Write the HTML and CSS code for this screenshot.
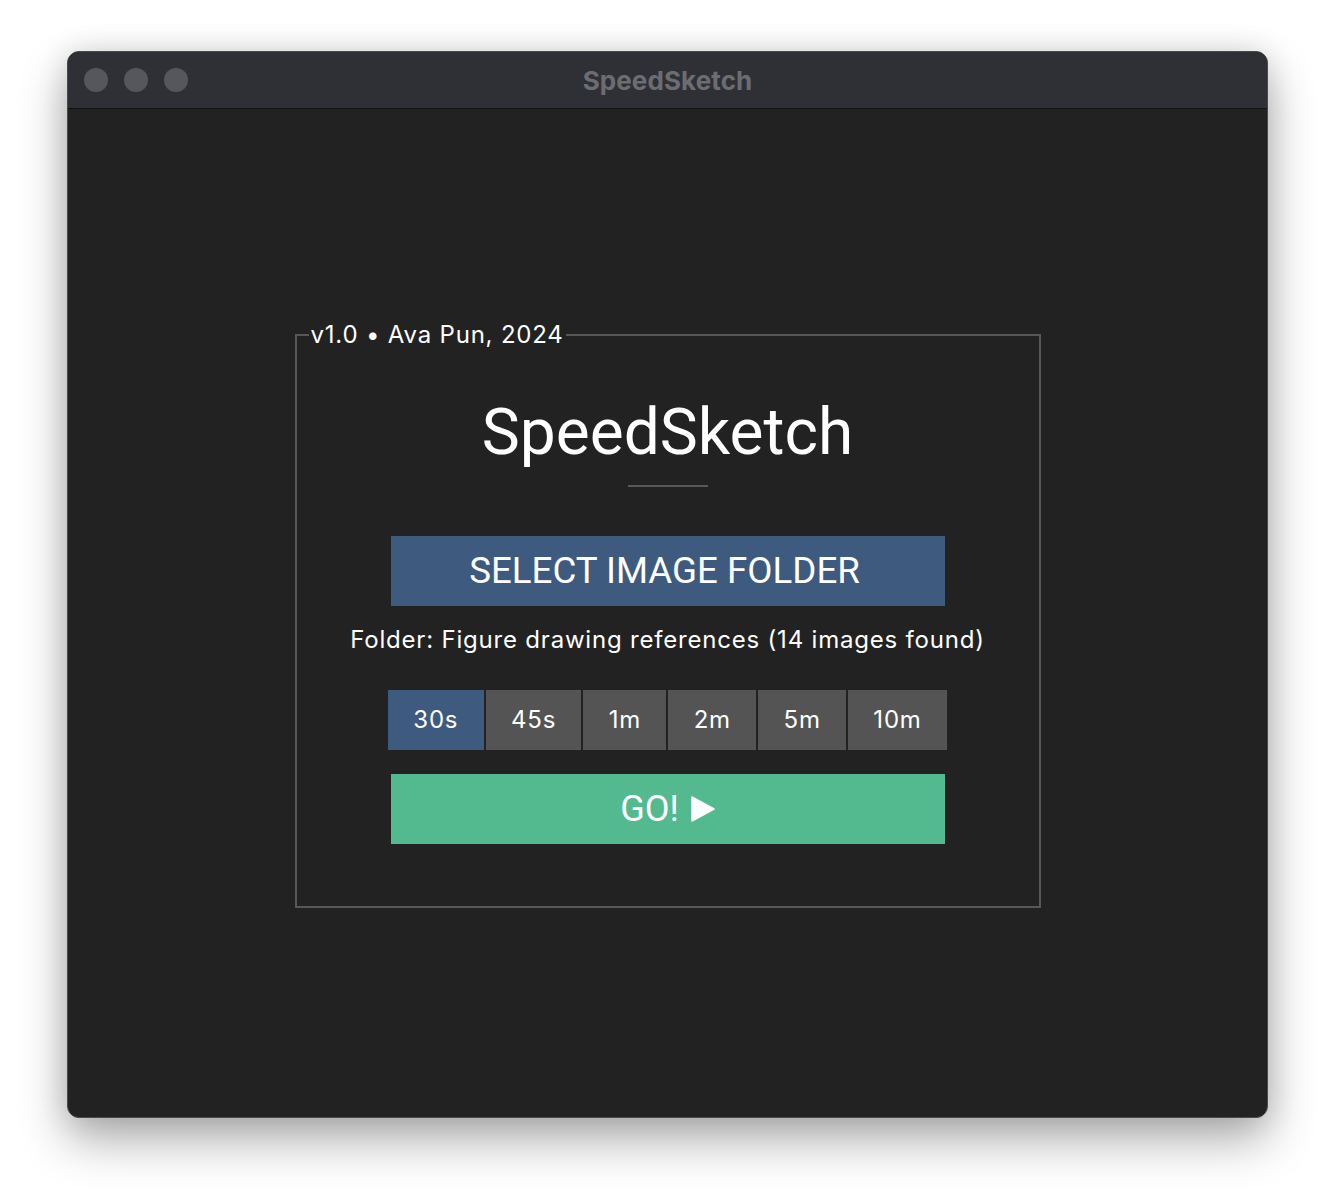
FILE: index.html
```html
<!DOCTYPE html>
<html lang="en">
<head>
<meta charset="utf-8">
<title>SpeedSketch</title>
<link rel="stylesheet" href="styles.css">
</head>
<body>
<div class="desktop">
  <div class="window">
    <div class="titlebar">
      <div class="lights">
        <span class="light"></span>
        <span class="light"></span>
        <span class="light"></span>
      </div>
      <div class="wtitle">SpeedSketch</div>
      <div class="spacer"></div>
    </div>
    <div class="content">
      <fieldset class="panel">
        <legend class="legend">v1.0 • Ava Pun, 2024</legend>
        <h1 class="title">SpeedSketch</h1>
        <div class="divider"></div>
        <button class="select">SELECT IMAGE FOLDER</button>
        <p class="folder">Folder: Figure drawing references (14 images found)</p>
        <div class="tabs">
          <button class="tab active">30s</button>
          <button class="tab">45s</button>
          <button class="tab">1m</button>
          <button class="tab">2m</button>
          <button class="tab">5m</button>
          <button class="tab">10m</button>
        </div>
        <button class="go">GO!<svg class="play" width="24" height="26" viewBox="0 0 24 26"><polygon points="1,1 23,13 1,25" fill="#fff" stroke="#fff" stroke-width="1.5" stroke-linejoin="round"/></svg></button>
      </fieldset>
    </div>
  </div>
</div>
</body>
</html>
```
FILE: styles.css
```css
html, body {
  margin: 0;
  padding: 0;
  background: #ffffff;
}

body {
  font-family: Roboto, "Liberation Sans", sans-serif;
}

.desktop {
  padding: 51px 68px 0 67px;
  height: 1202px;
  box-sizing: border-box;
}

.window {
  width: 1201px;
  height: 1067px;
  box-sizing: border-box;
  border: 1px solid #4a4a4c;
  border-radius: 12px;
  overflow: hidden;
  display: flex;
  flex-direction: column;
  background: #222222;
  box-shadow: 0 22px 48px rgba(0, 0, 0, 0.32), 0 0 30px rgba(0, 0, 0, 0.12);
}

.titlebar {
  height: 56px;
  flex: none;
  background: #2f3036;
  border-bottom: 1px solid #121212;
  display: grid;
  grid-template-columns: 1fr auto 1fr;
  align-items: center;
}

.lights {
  display: flex;
  gap: 16px;
  padding-left: 16px;
}

.light {
  width: 24px;
  height: 24px;
  border-radius: 50%;
  background: #56575c;
}

.wtitle {
  font-family: Inter, Roboto, sans-serif;
  font-weight: 700;
  font-size: 26px;
  letter-spacing: 0.1px;
  color: #6c6d72;
}

.content {
  flex: 1;
  display: flex;
  align-items: center;
  justify-content: center;
  padding-top: 2px;
}

.panel {
  width: 746px;
  box-sizing: border-box;
  margin: 0;
  border: 2px solid #575757;
  padding: 52px 12px 62px;
  display: flex;
  flex-direction: column;
  align-items: center;
  color: #ffffff;
  font-family: Inter, Roboto, sans-serif;
}

.legend {
  padding: 0 2px;
  font-size: 24px;
  line-height: 28px;
  letter-spacing: 0.8px;
  color: #ffffff;
}

.title {
  margin: 0;
  font-family: Roboto, sans-serif;
  font-weight: 400;
  font-size: 64px;
  line-height: 64px;
}

.divider {
  width: 80px;
  height: 2px;
  background: #585858;
  margin-top: 20px;
}

.select {
  margin-top: 49px;
  width: 554px;
  height: 70px;
  border: none;
  background: #3e5a7e;
  color: #ffffff;
  font-family: Roboto, sans-serif;
  font-size: 36.7px;
  padding: 0 6px 0 0;
}

.folder {
  margin: 20px 0 0;
  font-size: 24px;
  line-height: 28px;
  letter-spacing: 0.8px;
}

.tabs {
  margin-top: 36px;
  display: flex;
  gap: 2px;
}

.tab {
  height: 60px;
  border: none;
  padding: 0 25.3px;
  background: #545454;
  color: #ffffff;
  font-family: Inter, Roboto, sans-serif;
  font-size: 24px;
  letter-spacing: 0.8px;
}

.tab.active {
  background: #3e5a7e;
}

.go {
  margin-top: 24px;
  width: 554px;
  height: 70px;
  border: none;
  background: #53b98f;
  color: #ffffff;
  font-family: Roboto, sans-serif;
  font-size: 36px;
  padding: 0;
  display: flex;
  align-items: center;
  justify-content: center;
}

.play {
  margin-left: 12px;
}
```
